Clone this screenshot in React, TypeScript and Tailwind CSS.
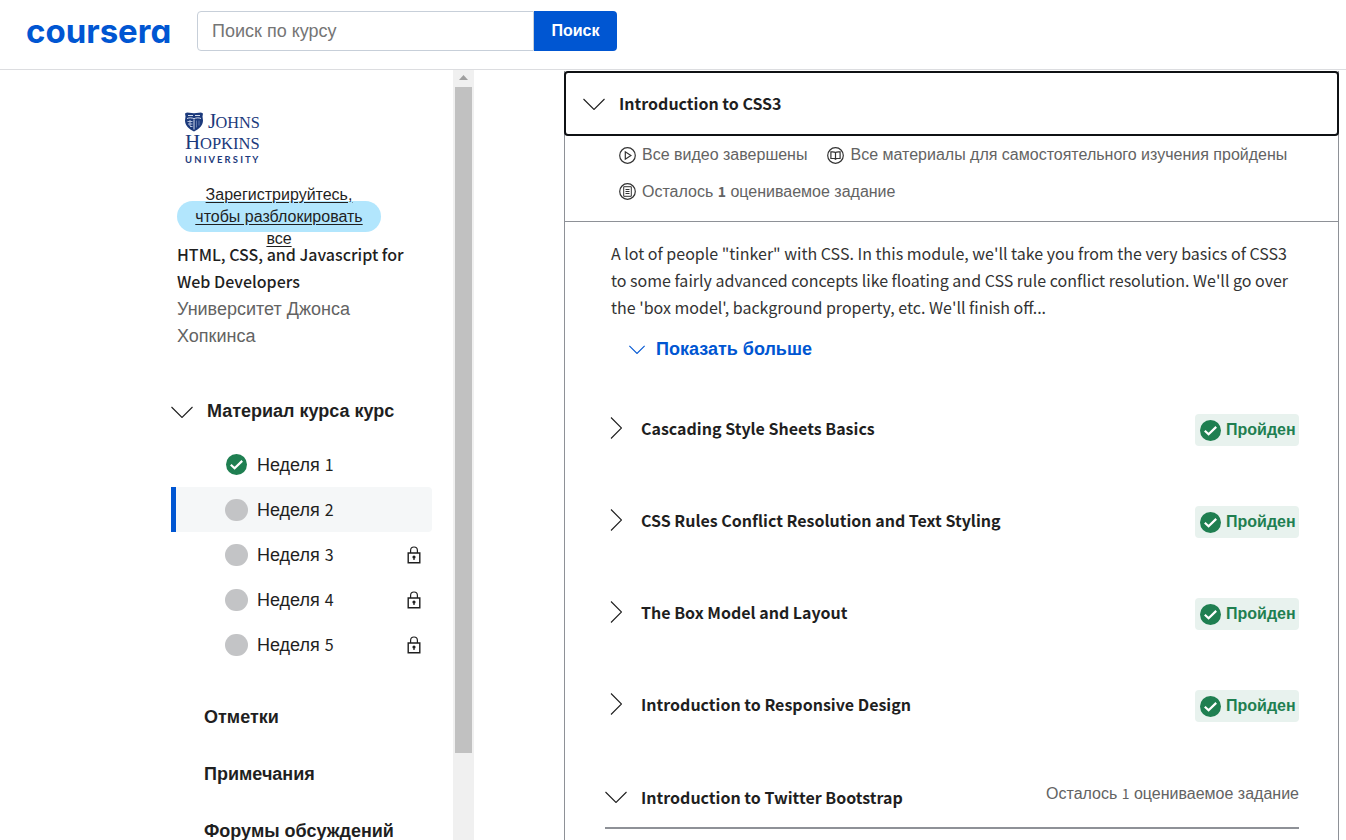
import type { ReactNode } from "react";

const latin = "font-['Noto_Sans_CJK_SC',sans-serif]";

function Num({ children }: { children: ReactNode }) {
  return <span className="font-['Noto_Sans_CJK_SC',sans-serif] text-[16px]">{children}</span>;
}

function ChevronDown({ className = "" }: { className?: string }) {
  return (
    <svg viewBox="0 0 22 12" className={className} fill="none" stroke="currentColor" aria-hidden="true">
      <path d="M.5 1 11 11.500 21.500 1" strokeWidth="1.1" vectorEffect="non-scaling-stroke" />
    </svg>
  );
}

function ChevronRight() {
  return (
    <svg viewBox="0 0 12 22" className="h-[22px] w-3" fill="none" stroke="currentColor" aria-hidden="true">
      <path d="M1 .5 11.500 11 1 21.500" strokeWidth="1.1" />
    </svg>
  );
}

function CheckCircle() {
  return (
    <svg viewBox="0 0 21 21" className="size-[21px] shrink-0" aria-hidden="true">
      <circle cx="10.5" cy="10.5" r="10.5" fill="#1f7f51" />
      <path d="m4.8 10.7 3.8 3.6 7.6-7.4" fill="none" stroke="#fff" strokeWidth="2.2" />
    </svg>
  );
}

function Lock() {
  return (
    <svg viewBox="0 0 14 18" className="h-[18px] w-3.5" fill="none" stroke="#1f1f1f" aria-hidden="true">
      <path d="M1.2 7h11.6v9.8H1.2z" strokeWidth="1.4" />
      <path d="M3.6 7V4.4a3.4 3.4 0 0 1 6.8 0V7" strokeWidth="1.2" />
      <circle cx="7" cy="11" r="1.6" fill="#1f1f1f" stroke="none" />
      <path d="M7 11v3" strokeWidth="1.3" />
    </svg>
  );
}

function StatusIcon({ kind }: { kind: "video" | "reading" | "task" }) {
  return (
    <svg viewBox="0 0 17 17" className="size-[17px] shrink-0" fill="none" stroke="#333" strokeWidth="1.2" aria-hidden="true">
      <circle cx="8.5" cy="8.5" r="7.8" />
      {kind === "video" && <path d="M6.3 4.8v7.4l5.6-3.7z" />}
      {kind === "reading" && (
        <path d="M8.5 5.5C7.7 4.9 6 4.7 3.9 4.9v6.6h3.6l1 .8 1-.8h3.6V4.9c-2.1-.2-3.8 0-4.6.6zM8.5 5.5v6.8" />
      )}
      {kind === "task" && <path d="M4.7 3.7h7.6v9.6H4.7zM6.5 6.5h4M6.5 8.5h4M6.5 10.5h4" strokeWidth="1" />}
    </svg>
  );
}

function UniversityLogo() {
  return (
    <svg viewBox="0 -4 78 58" className="ml-2 h-[58px] w-[78px]" fill="#1c3a7c" role="img" aria-label="Johns Hopkins University">
      <path d="M0 1.5 2 .5l7 .7 7-.7 2 1-.5 3 .5 4c0 5-4 8.5-9 11-5-2.500-9-6-9-11l.5-4z" />
      <path d="M3 3.500h5M10 3.500h5M2 6.500c2.500-1 5-.8 7 .3 2-1.100 4.500-1.300 7-.3M9 7.500v10" fill="none" stroke="#d5dcec" strokeWidth="1" />
      <path d="M2.500 9.500h5M3 12h4.500M5 14.500h2.500M5 8v6" fill="none" stroke="#b6c2dd" strokeWidth="1" />
      <path d="M11.500 8.500v7M14 8.500v5" stroke="#7488b8" strokeWidth=".8" />
      <g fontFamily="'Liberation Serif', serif">
        <text x="23" y="16" fontSize="21">J</text>
        <text x="30.5" y="16" fontSize="16.3">OHNS</text>
        <text x="0" y="37" fontSize="21">H</text>
        <text x="15" y="37" fontSize="16.5">OPKINS</text>
      </g>
      <text x="0" y="50.5" fontSize="9.4" fontWeight="700" fontFamily="Lato, sans-serif">U N I V E R S I T Y</text>
    </svg>
  );
}

const weeks = [
  { n: 1, done: true, locked: false, active: false },
  { n: 2, done: false, locked: false, active: true },
  { n: 3, done: false, locked: true, active: false },
  { n: 4, done: false, locked: true, active: false },
  { n: 5, done: false, locked: true, active: false },
];

const links = ["Отметки", "Примечания", "Форумы обсуждений"];

const lessons = [
  "Cascading Style Sheets Basics",
  "CSS Rules Conflict Resolution and Text Styling",
  "The Box Model and Layout",
  "Introduction to Responsive Design",
];

function Header() {
  return (
    <header className="flex h-[70px] shrink-0 items-start border-b border-[#dcdde0] pt-[11px]">
      <a
        href="#"
        className="ml-[26px] flex h-10 w-[171px] items-center font-[Inter,sans-serif] text-[33px] leading-9 font-bold text-[#0056d2] [font-feature-settings:'cv11']"
      >
        coursera
      </a>
      <form className="flex h-10 w-[420px]" onSubmit={(e) => e.preventDefault()}>
        <input
          type="text"
          aria-label="Поиск по курсу"
          placeholder="Поиск по курсу"
          className="min-w-0 flex-1 rounded-l border border-[#c7cfd9] px-3.5 text-[18px] text-[#1f1f1f] placeholder:text-[#757575]"
        />
        <button type="submit" className="w-[83px] rounded-r bg-[#0056d2] text-[16px] font-bold text-white">
          Поиск
        </button>
      </form>
    </header>
  );
}

function Sidebar() {
  return (
    <aside className="flex w-[474px] shrink-0">
      <div className="min-w-0 flex-1 overflow-hidden pt-[38px] pr-[21px] pl-[171px]">
        <div className="pl-1.5">
          <UniversityLogo />
          <a
            href="#"
            className="mt-[35px] flex h-[31px] w-[204px] items-center justify-center rounded-full bg-[#b2e6fd] px-4 text-center text-[16px] leading-[22px] text-[#1f1f1f] underline underline-offset-2"
          >
            Зарегистрируйтесь, чтобы разблокировать все
          </a>
          <h1 className={`${latin} mt-[9px] text-[16px] leading-[27px] font-medium text-[#1f1f1f]`}>
            HTML, CSS, and Javascript for Web Developers
          </h1>
          <p className="mt-px w-[200px] text-[18px] leading-[27px] text-[#636363]">Университет Джонса Хопкинса</p>
        </div>
        <button type="button" className="mt-[46px] flex h-[31px] items-center text-[18px] font-bold">
          <ChevronDown className="h-3 w-[22px]" />
          <span className="ml-[14px]">Материал курса курс</span>
        </button>
        <ul className="mt-[15px]">
          {weeks.map((w) => (
            <li key={w.n}>
              <a
                href="#"
                className={
                  w.active
                    ? "flex h-[45px] items-center rounded-r border-l-5 border-[#0056d2] bg-[#f5f7f8] pr-[11px] pl-[49px] text-[18px]"
                    : "flex h-[45px] items-center border-l-5 border-transparent pr-[11px] pl-[49px] text-[18px]"
                }
              >
                <span className="flex w-[23px] justify-center">
                  {w.done ? <CheckCircle /> : <span className="h-[22px] w-[23px] rounded-full bg-[#c3c4c6]" />}
                </span>
                <span className="ml-[9px] flex-1 pt-px">
                  Неделя <Num>{w.n}</Num>
                </span>
                {w.locked && <Lock />}
              </a>
            </li>
          ))}
        </ul>
        <ul className="mt-[22px] pl-[33px]">
          {links.map((l) => (
            <li key={l}>
              <a href="#" className="flex h-[57px] items-center text-[18px] font-bold">
                {l}
              </a>
            </li>
          ))}
        </ul>
      </div>
      <div className="flex w-[21px] shrink-0 flex-col items-center bg-[#f0f0f0]" aria-hidden="true">
        <svg viewBox="0 0 9 5" className="mt-[5px] mb-[7px] h-[5px] w-[9px]" fill="#a0a0a0">
          <path d="M4.5 0 9 5H0z" />
        </svg>
        <div className="h-[666px] w-[17px] bg-[#c1c1c1]" />
      </div>
    </aside>
  );
}

function Module() {
  return (
    <section className="mt-px mr-[7px] ml-[90px] min-w-0 flex-1 border-x border-[#8e9197]">
      <button
        type="button"
        className="-mx-px flex h-[65px] w-[calc(100%+2px)] items-center rounded border-2 border-[#0f1114] pl-[17px] text-left"
      >
        <ChevronDown className="h-3 w-[22px]" />
        <span className={`${latin} ml-[14px] pb-0.5 text-[16px] leading-6 font-bold`}>Introduction to CSS3</span>
      </button>
      <ul className="flex flex-wrap gap-x-5 border-b border-[#8e9197] pt-px pr-[39px] pb-[11px] pl-[54px] text-[16px] leading-9 text-[#636363]">
        <li className="flex items-center gap-1.5">
          <StatusIcon kind="video" />
          <span>Все видео завершены</span>
        </li>
        <li className="flex items-center gap-1.5">
          <StatusIcon kind="reading" />
          <span>Все материалы для самостоятельного изучения пройдены</span>
        </li>
        <li className="flex items-center gap-1.5">
          <StatusIcon kind="task" />
          <span>
            Осталось <b className={`${latin} text-[14px]`}>1</b> оцениваемое задание
          </span>
        </li>
      </ul>
      <div className="pt-[18px] pr-[39px] pl-10">
        <p className={`${latin} pl-1.5 text-[16px] leading-[27px] font-normal text-[#333]`}>
          A lot of people "tinker" with CSS. In this module, we'll take you from the very basics of CSS3 to some fairly
          advanced concepts like floating and CSS rule conflict resolution. We'll go over the 'box model', background
          property, etc. We'll finish off...
        </p>
        <button type="button" className="mt-[15px] ml-6 flex h-[27px] items-center text-[18px] font-bold text-[#0056d2]">
          <ChevronDown className="h-[9px] w-4" />
          <span className="ml-[11px]">Показать больше</span>
        </button>
        <ul className="mt-[19px]">
          {lessons.map((title) => (
            <li key={title}>
              <button type="button" className="flex h-[92px] w-full items-center text-left">
                <span className="flex w-[22px] justify-center">
                  <ChevronRight />
                </span>
                <span className={`${latin} ml-[14px] flex-1 text-[16px] leading-6 font-bold`}>{title}</span>
                <span className="mt-1 flex h-8 w-[104px] items-center gap-[5px] rounded bg-[#e8f2ee] pl-[5px] text-[16px] font-bold text-[#1f7f51]">
                  <CheckCircle />
                  Пройден
                </span>
              </button>
            </li>
          ))}
          <li>
            <button type="button" className="flex h-[79px] w-full items-center border-b-2 border-[#8e9197] pt-4 text-left">
              <ChevronDown className="h-3 w-[22px]" />
              <span className={`${latin} ml-[14px] flex-1 text-[16px] leading-6 font-bold`}>
                Introduction to Twitter Bootstrap
              </span>
              <span className="pb-1.5 text-[16px] text-[#636363]">
                Осталось <span className={`${latin} text-[14px]`}>1</span> оцениваемое задание
              </span>
            </button>
          </li>
        </ul>
      </div>
    </section>
  );
}

export default function App() {
  return (
    <div className="flex h-screen flex-col overflow-hidden bg-white font-['Liberation_Sans',Arial,sans-serif] text-[#1f1f1f]">
      <Header />
      <main className="flex min-h-0 flex-1">
        <Sidebar />
        <Module />
      </main>
    </div>
  );
}
